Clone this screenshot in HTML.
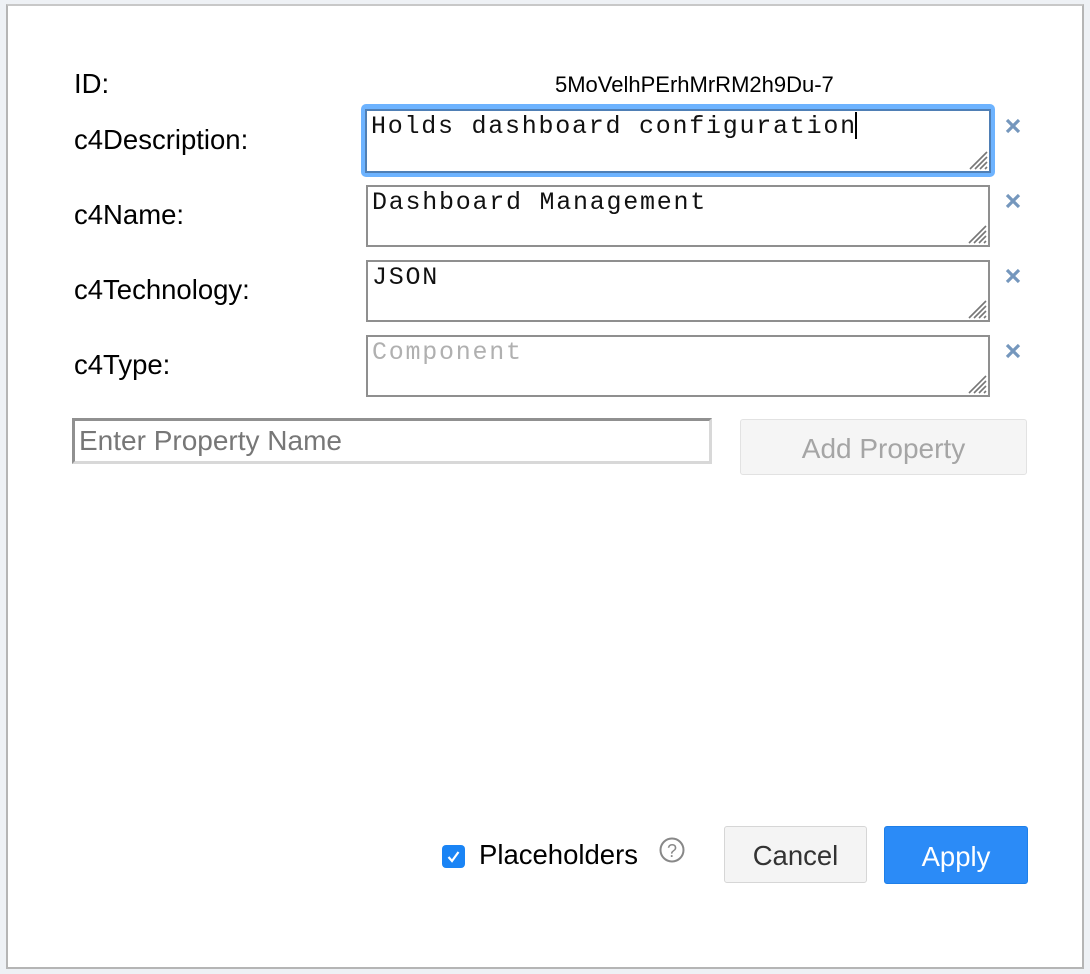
<!DOCTYPE html>
<html><head><style>
body{margin:0;width:1090px;height:974px;background:#eef1f5;position:relative;overflow:hidden;font-family:"Liberation Sans",sans-serif;}
.dlg{position:absolute;left:6px;top:4px;width:1074px;height:961px;background:#fff;border:2px solid #b5b5b5;border-top-color:#c8c8c8;}
.a{position:absolute;white-space:nowrap;}
.lbl{font-size:27.5px;color:#000;}
.ta{position:absolute;left:366px;width:620px;height:58px;border:2px solid #8f8f8f;background:#fff;box-sizing:content-box;}
.ta span{position:absolute;left:4px;top:1px;font-family:"Liberation Mono",monospace;font-size:25px;letter-spacing:1.75px;color:#111;white-space:nowrap;}
.grip{position:absolute;right:1px;bottom:1px;}
.x{position:absolute;left:1004px;width:18px;height:18px;}
</style></head><body>
<div class="dlg"></div>
<div class="a lbl" style="left:74px;top:68px">ID:</div>
<div class="a" style="left:555px;top:72px;font-size:22px">5MoVelhPErhMrRM2h9Du-7</div>
<div class="a lbl" style="left:74px;top:124px">c4Description:</div>
<div class="a lbl" style="left:74px;top:199px">c4Name:</div>
<div class="a lbl" style="left:74px;top:274px">c4Technology:</div>
<div class="a lbl" style="left:74px;top:349px">c4Type:</div>

<div class="a" style="left:361px;top:104px;width:634px;height:73px;background:#6db3ff;border-radius:5px"></div>
<div class="ta" style="top:109px;left:365px;width:622px;height:60px;border-color:#4f7fb5"><span>Holds dashboard configuration<b style="display:inline-block;width:2px;height:27px;background:#000;vertical-align:-6px;margin-left:-2px"></b></span>
<svg class="grip" width="24" height="24"><path d="M23 6L6 23M23 11L11 23M23 16L16 23M23 21L21 23" stroke="#777" stroke-width="1.6"/></svg></div>
<div class="ta" style="top:185px"><span>Dashboard Management</span><svg class="grip" width="24" height="24"><path d="M23 6L6 23M23 11L11 23M23 16L16 23M23 21L21 23" stroke="#777" stroke-width="1.6"/></svg></div>
<div class="ta" style="top:260px"><span>JSON</span><svg class="grip" width="24" height="24"><path d="M23 6L6 23M23 11L11 23M23 16L16 23M23 21L21 23" stroke="#777" stroke-width="1.6"/></svg></div>
<div class="ta" style="top:335px"><span style="color:#b0b0b0">Component</span><svg class="grip" width="24" height="24"><path d="M23 6L6 23M23 11L11 23M23 16L16 23M23 21L21 23" stroke="#777" stroke-width="1.6"/></svg></div>

<svg class="x" style="top:117px" viewBox="0 0 18 18"><path d="M3 3L15 15M15 3L3 15" stroke="#7597bd" stroke-width="3.2"/></svg>
<svg class="x" style="top:192px" viewBox="0 0 18 18"><path d="M3 3L15 15M15 3L3 15" stroke="#7597bd" stroke-width="3.2"/></svg>
<svg class="x" style="top:267px" viewBox="0 0 18 18"><path d="M3 3L15 15M15 3L3 15" stroke="#7597bd" stroke-width="3.2"/></svg>
<svg class="x" style="top:342px" viewBox="0 0 18 18"><path d="M3 3L15 15M15 3L3 15" stroke="#7597bd" stroke-width="3.2"/></svg>

<div class="a" style="left:72px;top:418px;width:634px;height:40px;border:3px solid #d8d8d8;border-top-color:#909090;border-left-color:#909090;background:#fff"></div>
<div class="a" style="left:79px;top:425px;font-size:28px;color:#777">Enter Property Name</div>
<div class="a" style="left:740px;top:419px;width:285px;height:54px;border:1px solid #e2e2e2;background:#f5f5f5;border-radius:3px;font-size:28px;color:#a5a5a5;text-align:center;line-height:58px">Add Property</div>

<div class="a" style="left:442px;top:845px;width:23px;height:23px;background:#1a84f5;border-radius:4px"></div>
<svg class="a" style="left:442px;top:845px" width="23" height="23"><path d="M6.5 12L10 16L16.5 7" stroke="#fff" stroke-width="2.2" fill="none"/></svg>
<div class="a" style="left:479px;top:839px;font-size:27.5px">Placeholders</div>
<svg class="a" style="left:658px;top:836px" width="28" height="28"><circle cx="14" cy="14" r="11.5" stroke="#888" stroke-width="2" fill="none"/><text x="14" y="21" text-anchor="middle" font-family="Liberation Sans" font-size="18" fill="#888">?</text></svg>
<div class="a" style="left:724px;top:826px;width:141px;height:55px;border:1px solid #d6d6d6;background:#f4f4f4;border-radius:3px;font-size:27.5px;color:#333;text-align:center;line-height:58px">Cancel</div>
<div class="a" style="left:884px;top:826px;width:142px;height:56px;border:1px solid #1e7fe8;background:#2b8bf7;border-radius:3px;font-size:27.5px;color:#fff;text-align:center;line-height:60px">Apply</div>
</body></html>
